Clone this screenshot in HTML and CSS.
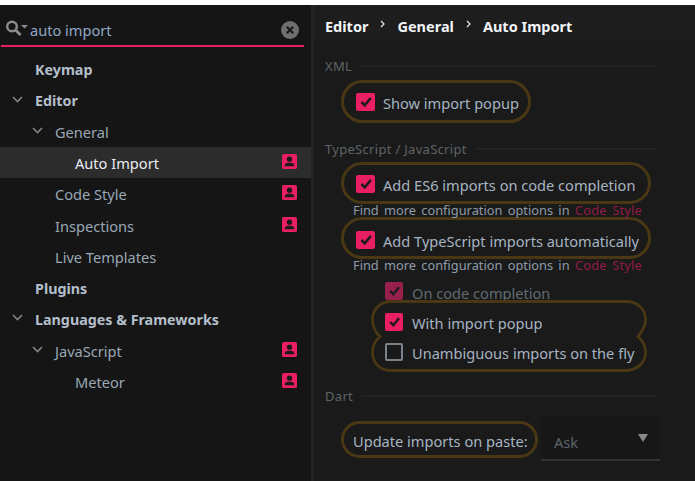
FILE: index.html
```html
<!DOCTYPE html>
<html lang="en">
<head>
    <meta charset="UTF-8">
    <meta name="viewport" content="width=device-width, initial-scale=1.0">
    <title>Auto Import</title>
    <link rel="stylesheet" href="styles.css">
</head>
<body>
    <svg class="defs" width="0" height="0">
        <symbol id="chevron" viewBox="0 0 11 7"><path d="M1 1l4.5 4.5L10 1" fill="none" stroke="currentColor" stroke-width="1.6"/></symbol>
        <symbol id="crumb-sep" viewBox="0 0 5 8"><path d="M1 1l3 3-3 3" fill="none" stroke="#e6eaee" stroke-width="1.2"/></symbol>
        <symbol id="profile" viewBox="0 0 16 16">
            <rect width="16" height="16" rx="2" fill="#e91e63"/>
            <circle cx="8" cy="5.500" r="2.800" fill="#1a1a1a"/>
            <path d="M3 13v-1.200C3 10 6 9.400 8 9.400s5 .6 5 2.400V13z" fill="#1a1a1a"/>
        </symbol>
        <symbol id="tick" viewBox="0 0 19 18"><path d="M5.500 9l3.200 3.400L14.800 5" fill="none" stroke="#1f1a1d" stroke-width="2.600"/></symbol>
    </svg>
    <div class="app">
        <aside class="sidebar">
            <div class="search">
                <svg class="search-icon" width="24" height="17" viewBox="0 0 24 17">
                    <circle cx="6" cy="7.500" r="4.800" fill="none" stroke="#8c8c8c" stroke-width="2.400"/>
                    <path d="M9.500 11l5 5" stroke="#8c8c8c" stroke-width="2.800"/>
                    <path d="M15 6h7l-3.500 3.500z" fill="#8c8c8c"/>
                </svg>
                <span class="search-text">auto import</span>
                <svg class="search-clear" width="18" height="18" viewBox="0 0 18 18">
                    <circle cx="9" cy="9" r="9" fill="#6e6e6e"/>
                    <path d="M5.800 5.800l6.400 6.400M12.200 5.800l-6.400 6.400" stroke="#1a1a1a" stroke-width="2.200"/>
                </svg>
            </div>
            <div class="tree">
                <div class="tree-row level-0 bold">Keymap</div>
                <div class="tree-row level-0 bold open"><svg class="chev"><use href="#chevron"/></svg>Editor</div>
                <div class="tree-row level-1 open"><svg class="chev"><use href="#chevron"/></svg>General</div>
                <div class="tree-row level-2 selected">Auto Import<svg class="badge"><use href="#profile"/></svg></div>
                <div class="tree-row level-1">Code Style<svg class="badge"><use href="#profile"/></svg></div>
                <div class="tree-row level-1">Inspections<svg class="badge"><use href="#profile"/></svg></div>
                <div class="tree-row level-1">Live Templates</div>
                <div class="tree-row level-0 bold">Plugins</div>
                <div class="tree-row level-0 bold open"><svg class="chev"><use href="#chevron"/></svg>Languages &amp; Frameworks</div>
                <div class="tree-row level-1 open"><svg class="chev"><use href="#chevron"/></svg>JavaScript<svg class="badge"><use href="#profile"/></svg></div>
                <div class="tree-row level-2">Meteor<svg class="badge"><use href="#profile"/></svg></div>
            </div>
        </aside>
        <main class="content">
            <header class="crumbs">
                <span>Editor</span><svg class="sep"><use href="#crumb-sep"/></svg><span>General</span><svg class="sep"><use href="#crumb-sep"/></svg><span>Auto Import</span>
            </header>

            <div class="group-title">XML</div>
            <div class="ring ring-xml"><span class="box on"><svg><use href="#tick"/></svg></span>Show import popup</div>

            <div class="group-title">TypeScript / JavaScript</div>
            <div class="ring ring-ts"><span class="box on"><svg><use href="#tick"/></svg></span>Add ES6 imports on code completion</div>
            <div class="hint">Find more configuration options in <a class="hint-link">Code Style</a></div>
            <div class="ring ring-ts second"><span class="box on"><svg><use href="#tick"/></svg></span>Add TypeScript imports automatically</div>
            <div class="hint">Find more configuration options in <a class="hint-link">Code Style</a></div>
            <div class="sub-row dim"><span class="box on"><svg><use href="#tick"/></svg></span>On code completion</div>
            <div class="ring-pair">
                <svg class="ring-pair-outline" width="276" height="72" viewBox="0 0 276 72">
                    <path d="M20 1.500H256C267 1.500 274.500 10 274.500 19C274.500 27 270 33 267 36.500C271 40 274.500 45 274.500 52C274.500 63 266 70.500 254 70.500H20C9 70.500 1.500 63 1.500 52C1.500 45 5 40 9 36.500C5 33 1.500 27 1.500 19C1.500 10 9 1.500 20 1.500Z" fill="none" stroke="#4a3814" stroke-width="2.800"/>
                </svg>
                <div class="pair-row first"><span class="box on"><svg><use href="#tick"/></svg></span>With import popup</div>
                <div class="pair-row last"><span class="box"></span>Unambiguous imports on the fly</div>
            </div>

            <div class="group-title dart">Dart</div>
            <div class="paste-row">
                <div class="ring ring-paste">Update imports on paste:</div>
                <div class="select"><span>Ask</span><i class="select-arrow"></i></div>
            </div>
        </main>
    </div>
</body>
</html>
```

FILE: styles.css
```css
:root {
    --pink: #e91e63;
    --ring: #4a3814;
    --text: #a6b4c2;
    --muted: #5d6468;
}

html, body {
    margin: 0;
    height: 100%;
    overflow: hidden;
}

body {
    background: #fff;
    padding-top: 5px;
    box-sizing: border-box;
    font-family: "Noto Sans", sans-serif;
    font-size: 14.6px;
    color: var(--text);
}

.defs {
    position: absolute;
}

.app {
    display: flex;
    height: 476px;
}

.sidebar {
    width: 311px;
    flex: none;
    background: #151515;
    border-right: 3px solid #232323;
}

.search {
    display: flex;
    align-items: center;
    height: 31px;
    margin: 0 7px 0 1px;
    padding: 9px 5px 0 5px;
    border-bottom: 2px solid var(--pink);
}

.search-icon {
    flex: none;
    margin-bottom: 4px;
}

.search-text {
    color: #8fa9c4;
}

.search-clear {
    margin-left: auto;
}

.tree {
    margin-top: 6px;
}

.tree-row {
    display: flex;
    align-items: center;
    box-sizing: border-box;
    height: 31.25px;
    padding-top: 1.5px;
    padding-right: 14px;
    color: #9aa8b6;
}

.level-0 { padding-left: 35px; }
.level-1 { padding-left: 55px; }
.level-2 { padding-left: 75px; }

.level-0.open { padding-left: 12px; }
.level-1.open { padding-left: 32px; }

.bold {
    font-weight: 700;
    font-size: 14.3px;
    color: #b3bfca;
}

.selected {
    background: #2c2c2c;
    color: #e8edf2;
}

.chev {
    width: 11px;
    height: 7px;
    margin: 0 12px 3px 0;
    color: #858585;
    flex: none;
}

.badge {
    width: 15px;
    height: 15px;
    margin: 0 0 3px auto;
}

.content {
    flex: 1;
    min-width: 0;
    background: #1a1a1a;
    padding-left: 11px;
}

.crumbs {
    display: flex;
    align-items: center;
    box-sizing: border-box;
    height: 35px;
    margin-left: -11px;
    padding: 7px 0 0 11px;
    background: #1d1d1d;
    font-weight: 700;
    font-size: 14.5px;
    color: #f2f5f8;
}

.sep {
    width: 5px;
    height: 8px;
    padding: 0 12px;
    margin-bottom: 5px;
    flex: none;
}

.group-title {
    display: flex;
    align-items: center;
    height: 18px;
    margin-top: 17px;
    font-size: 13px;
    letter-spacing: .3px;
    color: var(--muted);
}

.group-title.dart {
    margin-top: 15px;
}

.group-title::after {
    content: "";
    flex: 1;
    height: 2px;
    background: #222;
    margin: 0 38px 0 8px;
}

.ring {
    display: flex;
    align-items: center;
    box-sizing: border-box;
    border: 3px solid var(--ring);
    border-radius: 22px;
    margin-left: 16px;
    padding-left: 12px;
    white-space: nowrap;
}

.ring-xml {
    width: 190px;
    height: 43px;
    margin-top: 5px;
    padding-top: 3px;
}

.ring-ts {
    width: 310px;
    height: 42px;
    padding-top: 4px;
}

.ring-ts.second {
    padding-top: 6px;
}

.group-title + .ring-ts {
    margin-top: 4px;
}

.box {
    display: inline-flex;
    box-sizing: border-box;
    width: 19px;
    height: 18px;
    margin: 0 8px 3px 0;
    border: 2px solid #7b8288;
    border-radius: 2px;
    flex: none;
}

.box.on {
    background: var(--pink);
    border: 0;
}

.box svg {
    width: 19px;
    height: 18px;
}

.hint {
    height: 13px;
    line-height: 13px;
    margin-left: 28px;
    font-size: 12.8px;
    word-spacing: 2px;
    color: #8e9ba8;
    white-space: nowrap;
}

.hint-link {
    color: #8f1c46;
    letter-spacing: .2px;
}

.sub-row {
    display: flex;
    align-items: flex-start;
    height: 18px;
    line-height: 22px;
    margin-top: 10px;
    margin-left: 60px;
}

.sub-row .box {
    width: 18px;
    background: #98204c;
    margin-right: 9px;
}

.sub-row.dim {
    color: #5f6a72;
}

.ring-pair {
    position: relative;
    width: 276px;
    height: 72px;
    margin-left: 46px;
}

.ring-pair-outline {
    position: absolute;
    left: 0;
    top: 0;
}

.pair-row {
    position: relative;
    display: flex;
    align-items: center;
    box-sizing: border-box;
    padding-left: 14px;
    white-space: nowrap;
}

.pair-row .box {
    width: 18px;
    margin-right: 9px;
}

.pair-row.first {
    height: 37px;
    padding-top: 9px;
}

.pair-row.last {
    height: 35px;
    padding-bottom: 3px;
}

.paste-row {
    display: flex;
    align-items: center;
    height: 44px;
    margin-top: 12px;
}

.ring-paste {
    width: 197px;
    height: 37px;
    padding: 3px 0 0 9px;
}

.select {
    display: flex;
    align-items: center;
    box-sizing: border-box;
    width: 119px;
    height: 44px;
    margin-left: 3px;
    padding: 8px 12px 0 13px;
    background: #171717;
    border-bottom: 2px solid #333;
    color: var(--muted);
}

.select-arrow {
    margin-left: auto;
    margin-top: -8px;
    border-left: 5px solid transparent;
    border-right: 5px solid transparent;
    border-top: 8px solid #8a8a8a;
}
```
